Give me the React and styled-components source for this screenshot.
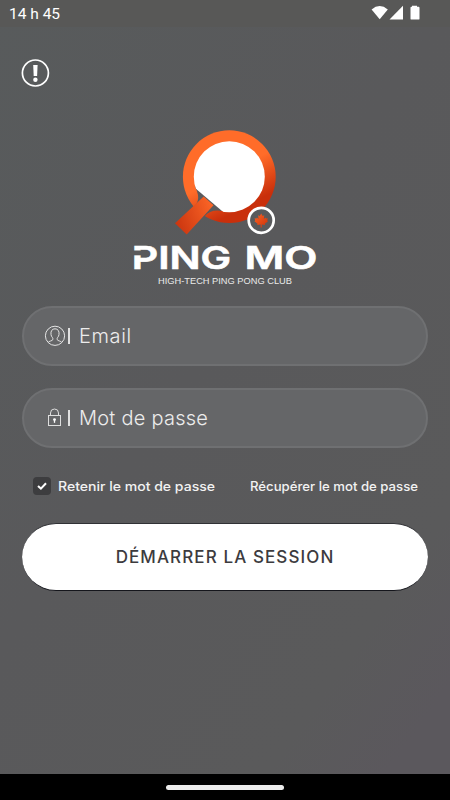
import { useState } from "react";
import styled, { createGlobalStyle } from "styled-components";

function App() {
  const [remember, setRemember] = useState(true);
  return (
    <>
      <GlobalStyles />
      <Screen>
        <StatusBar>
          <Clock>14 h 45</Clock>
          <StatusIcons />
        </StatusBar>
        <Main>
          <InfoButton aria-label="Information">
            <InfoIcon />
          </InfoButton>
          <Logo />
          <Form onSubmit={(e) => e.preventDefault()}>
            <Field>
              <UserIcon />
              <Divider />
              <Input type="text" placeholder="Email" $spacing="0.6px" />
            </Field>
            <Field>
              <LockIcon />
              <Divider />
              <Input
                type="password"
                placeholder="Mot de passe"
                $spacing="0.25px"
              />
            </Field>
            <Options>
              <Remember>
                <HiddenCheck
                  type="checkbox"
                  checked={remember}
                  onChange={() => setRemember(!remember)}
                />
                <Box>{remember && <CheckIcon />}</Box>
                <OptionText width={157}>Retenir le mot de passe</OptionText>
              </Remember>
              <OptionText width={168}>Récupérer le mot de passe</OptionText>
            </Options>
            <Submit type="submit">DÉMARRER LA SESSION</Submit>
          </Form>
        </Main>
        <NavBar>
          <HomeHandle />
        </NavBar>
      </Screen>
    </>
  );
}

const StatusIcons = () => (
  <svg width="52" height="16" viewBox="370 4 52 16" fill="#fff">
    <path d="M371.6 9.4Q379.7 2.5 387.8 9.4L379.7 19.3Z" />
    <path d="M403 5.8V19.6H389.5Z" />
    <path d="M412 6.8V5.8h5v1h1.6q.9 0 .9.9v11q0 .9-.9.9h-7.2q-.9 0-.9-.9v-11q0-.9.9-.9z" />
  </svg>
);

const InfoIcon = () => (
  <svg width="28" height="28" viewBox="0 0 28 28">
    <circle cx="13.4" cy="14" r="13" fill="none" stroke="#fff" strokeWidth="1.7" />
    <path d="M11.2 6h4.4l-.5 11h-3.4z" fill="#fff" />
    <circle cx="13.4" cy="20.7" r="2.2" fill="#fff" />
  </svg>
);

const UserIcon = () => (
  <svg width="22" height="22" viewBox="0 0 22 22" fill="none" stroke="#e4e4e4">
    <circle cx="11" cy="10.8" r="9.6" />
    <path d="M4.2 17.4c.8-1.3 4-1.5 4.6-2.7.3-.7 0-1.5-.3-2-.8-.9-1.4-2-1.5-3.2-.5-3.400 1.200-5.700 4-5.700s4.500 2.300 4 5.700c-.1 1.200-.7 2.300-1.500 3.200-.3.500-.6 1.300-.3 2 .6 1.200 3.800 1.400 4.600 2.700" />
  </svg>
);

const LockIcon = () => (
  <svg width="22" height="22" viewBox="0 0 22 22" fill="none" stroke="#dedede">
    <rect x="4.5" y="8.5" width="12" height="10" />
    <path d="M6.5 8.5V6a4 4 0 0 1 8 0v2.5" />
    <circle cx="10.5" cy="12.6" r="1.4" fill="#fff" stroke="none" />
    <path d="M10.500 12.800v3" strokeWidth="1.300" stroke="#fff" />
  </svg>
);

const CheckIcon = () => (
  <svg width="10" height="8" viewBox="0 0 10 8" fill="none">
    <path d="M1 3.9l2.900 2.700L9 1.200" stroke="#fff" strokeWidth="2" />
  </svg>
);

const Logo = () => (
  <LogoSvg viewBox="120 120 210 175" width="210" height="175">
    <defs>
      <linearGradient id="ring" x1="0.3" y1="0.1" x2="0.72" y2="0.9">
        <stop offset="0.45" stopColor="#ff6c29" />
        <stop offset="0.9" stopColor="#c92f0b" />
      </linearGradient>
      <linearGradient id="grip" x1="0" y1="0.7" x2="1" y2="0.3">
        <stop offset="0" stopColor="#cb350f" />
        <stop offset="1" stopColor="#fa6426" />
      </linearGradient>
      <linearGradient id="leaf" x1="0" y1="0" x2="1" y2="1">
        <stop offset="0" stopColor="#fb6426" />
        <stop offset="1" stopColor="#cd3108" />
      </linearGradient>
      <clipPath id="face">
        <path d="M180 130H280V220H232.600L180 175.300Z" />
      </clipPath>
    </defs>
    <circle cx="229.3" cy="176.7" r="46.4" fill="url(#ring)" />
    {/* neck cut out of the ring */}
    <path
      d="M194.800 186Q199.600 196 197.700 201Q197 204.600 193 207.500L190 212L200 222L204.700 216.300Q211.500 207.500 228 212.300Z"
      fill="#595a5c"
    />
    <circle cx="229.3" cy="176.700" r="35.500" fill="#fff" clipPath="url(#face)" />
    <path
      d="M203.700 196.500L213.500 205.200L186.700 234.400L175 223.300Z"
      fill="url(#grip)"
    />
    <circle
      cx="261.2"
      cy="220.3"
      r="12.500"
      fill="#595a5c"
      stroke="#fff"
      strokeWidth="2.700"
    />
    <path
      d="M261.200 213.400L262.700 216L264.300 215.200L263.800 219L265.500 217.500L266 218.500L267.800 218.200L267.200 220.500L268 221.200L264.800 223.800L265.100 225L261.700 224.600L261.900 227.400H260.500L260.700 224.600L257.300 225L257.600 223.800L254.400 221.200L255.200 220.500L254.600 218.200L256.400 218.500L256.900 217.500L258.600 219L258.100 215.200L259.700 216Z"
      fill="url(#leaf)"
    />
    <Wordmark x="131.800" y="268.500" textLength="99.500" lengthAdjust="spacingAndGlyphs">
      PING
    </Wordmark>
    <Wordmark x="244.500" y="268.500" textLength="73" lengthAdjust="spacingAndGlyphs">
      MO
    </Wordmark>
    {/* open slot on the left of the P */}
    <rect x="132" y="250.500" width="10" height="4.800" fill="#595a5c" />
    <Tagline x="158" y="283.800" textLength="134" lengthAdjust="spacingAndGlyphs">
      HIGH-TECH PING PONG CLUB
    </Tagline>
  </LogoSvg>
);

// svg text so both labels keep an exact run length
const OptionText = ({ children, width }) => (
  <OptionSvg width={width} height="18">
    <text x="0" y="13.500" textLength={width} lengthAdjust="spacingAndGlyphs">
      {children}
    </text>
  </OptionSvg>
);

const GlobalStyles = createGlobalStyle`
  * {
    box-sizing: border-box;
    margin: 0;
    padding: 0;
  }
  body {
    background: #58595b;
    font-family: "Inter", "Open Sans", sans-serif;
  }
`;
const Screen = styled.div`
  width: 450px;
  height: 800px;
  display: flex;
  flex-direction: column;
  overflow: hidden;
  background: linear-gradient(125deg, #585b5c 0%, #59595b 45%, #5a5a5b 80%, #5b585d 92%);
`;
const StatusBar = styled.header`
  height: 27px;
  flex-shrink: 0;
  padding: 0 28px 0 9px;
  display: flex;
  align-items: center;
  justify-content: space-between;
  background: #585857;
  svg {
    margin-top: -3px;
  }
`;
const Clock = styled.span`
  padding-top: 2px;
  color: #fff;
  font-family: "Roboto", sans-serif;
  font-size: 15.5px;
  line-height: 27px;
`;
const Main = styled.main`
  flex: 1;
  display: flex;
  flex-direction: column;
  align-items: center;
  padding: 32px 22px 0;
`;
const InfoButton = styled.button`
  align-self: flex-start;
  width: 28px;
  height: 28px;
  border: none;
  background: none;
  svg {
    display: block;
    overflow: visible;
  }
`;
const LogoSvg = styled.svg`
  display: block;
  flex-shrink: 0;
  margin: 33px 0 11px;
`;
const Wordmark = styled.text`
  font-family: "Inter", sans-serif;
  font-size: 31.5px;
  font-weight: 600;
  fill: #fff;
  stroke: #fff;
  stroke-width: 0.6px;
`;
const Tagline = styled.text`
  font-family: "Liberation Sans", sans-serif;
  font-size: 9.6px;
  fill: #eaeaea;
`;
const Form = styled.form`
  width: 100%;
  display: flex;
  flex-direction: column;
`;
const Field = styled.label`
  height: 60px;
  margin-bottom: 22px;
  padding: 0 24px 0 20px;
  display: flex;
  align-items: center;
  border: 2px solid #6f7072;
  border-radius: 30px;
  background: #656668;
`;
const Divider = styled.span`
  width: 2px;
  height: 16px;
  margin: 0 9px 0 2px;
  background: #e0e0e0;
`;
const Input = styled.input`
  flex: 1;
  min-width: 0;
  border: none;
  outline: none;
  background: none;
  color: #f0f0f0;
  font-family: "Inter", sans-serif;
  font-size: 20px;
  font-weight: 300;
  letter-spacing: ${(props) => props.$spacing};
  &::placeholder {
    color: #ececec;
    opacity: 1;
  }
`;
const Options = styled.div`
  height: 18px;
  margin: 7px 10px 28px 11px;
  display: flex;
  align-items: center;
  justify-content: space-between;
`;
const Remember = styled.label`
  display: flex;
  align-items: center;
  gap: 7px;
`;
const HiddenCheck = styled.input`
  display: none;
`;
const Box = styled.span`
  width: 18px;
  height: 18px;
  display: flex;
  align-items: center;
  justify-content: center;
  border-radius: 4px;
  background: #3d3d3f;
`;
const OptionSvg = styled.svg`
  display: block;
  overflow: visible;
  font-size: 12.8px;
  font-weight: 500;
  fill: #f2f2f2;
`;
const Submit = styled.button`
  height: 68px;
  border: none;
  border-top: 1px solid #303135;
  border-bottom: 1px solid #15161c;
  border-radius: 34px;
  background: #fff;
  color: #3c3b3e;
  font-family: "Inter", sans-serif;
  font-size: 17px;
  font-weight: 500;
  letter-spacing: 1.1px;
`;
const NavBar = styled.footer`
  height: 26px;
  flex-shrink: 0;
  display: flex;
  align-items: center;
  justify-content: center;
  background: #000;
`;
const HomeHandle = styled.div`
  width: 118px;
  height: 5px;
  border-radius: 3px;
  background: #ececec;
`;

export default App;
